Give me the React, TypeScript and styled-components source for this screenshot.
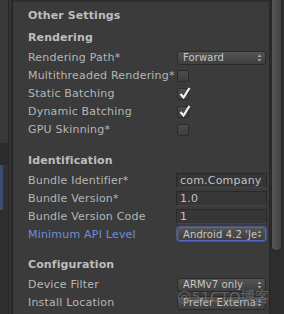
import React from "react";
import styled, { createGlobalStyle } from "styled-components";

const GlobalStyle = createGlobalStyle`
  html, body {
    margin: 0;
    padding: 0;
    background: #2c2c2c;
  }
  * {
    box-sizing: border-box;
  }
`;

const Window = styled.div`
  position: relative;
  display: flex;
  width: 284px;
  height: 314px;
  overflow: hidden;
  font-family: "DejaVu Sans", Verdana, sans-serif;
  font-size: 11px;
  color: #b6b6b6;
`;

const Gutter = styled.div`
  display: flex;
  width: 13px;
  flex-shrink: 0;
  border-right: 1px solid #242424;
`;

const GutterEdge = styled.div`
  display: flex;
  flex-direction: column;
  width: 9px;
`;

const GutterBand = styled.div<{ $h: number; $color: string; $accent?: string }>`
  height: ${(p) => p.$h}px;
  flex-shrink: 0;
  background: ${(p) => p.$color};
  border-left: 3px solid ${(p) => p.$accent || p.$color};
`;

const GutterFill = styled.div`
  flex: 1;
  background: #2f2f2f;
`;

const GutterLines = styled.div`
  width: 4px;
  border-left: 1px solid #262626;
  border-right: 1px solid #2a2a2a;
  background: #363636;
`;

const Panel = styled.div`
  flex: 1;
  background: #3b3b3b;
  border-top: 2px solid #2e2e2e;
  padding: 4px 1px 0 15px;
`;

const Title = styled.div`
  height: 18px;
  display: flex;
  align-items: center;
  font-weight: bold;
  color: #bebebe;
  letter-spacing: 0.1px;
`;

const Section = styled.div<{ $first?: boolean }>`
  margin-top: ${(p) => (p.$first ? 4.5 : 12.6)}px;
`;

const Heading = styled.div`
  height: 18px;
  margin-bottom: 2px;
  display: flex;
  align-items: center;
  font-weight: bold;
  color: #bebebe;
  letter-spacing: 0.1px;
`;

const Row = styled.div`
  display: flex;
  align-items: center;
  height: 18px;
  letter-spacing: 0.2px;
`;

const Label = styled.div<{ $active?: boolean }>`
  width: 148px;
  flex-shrink: 0;
  white-space: nowrap;
  color: ${(p) => (p.$active ? "#6f8ddc" : "#b6b6b6")};
`;

const TextField = styled.div`
  width: 91px;
  height: 15px;
  display: flex;
  align-items: center;
  padding: 0 3px;
  background: #363636;
  border: 1px solid #282828;
  border-bottom-color: #444;
  color: #c2c2c2;
  white-space: nowrap;
  overflow: hidden;
`;

const Popup = styled.div<{ $focus?: boolean }>`
  width: 89px;
  height: 14px;
  margin-left: 1px;
  display: flex;
  align-items: center;
  padding: 0 3px 0 5px;
  font-size: 10px;
  letter-spacing: 0.1px;
  background: linear-gradient(#555555, #464646 60%, #404040);
  border: 1px solid ${(p) => (p.$focus ? "#5566c4" : "#2a2a2a")};
  box-shadow: ${(p) => (p.$focus ? "0 0 1px 1px rgba(90, 110, 210, 0.55)" : "none")};
  border-radius: 3px;
  color: #c6c6c6;
`;

const PopupText = styled.span`
  flex: 1;
  white-space: nowrap;
  overflow: hidden;
`;

const Box = styled.div`
  position: relative;
  width: 12px;
  height: 12px;
  margin-left: 1px;
  border: 1px solid #2a2a2a;
  border-radius: 2px;
  background: linear-gradient(#4b4b4b, #3f3f3f);
`;

const Tick = styled.svg`
  position: absolute;
  left: 0;
  top: -3px;
`;

const ScrollTrack = styled.div`
  width: 15px;
  flex-shrink: 0;
  background: #2d2d2d;
  border-left: 1px solid #262626;
  padding: 0 2px 0 1px;
`;

const ScrollThumb = styled.div`
  height: 257px;
  margin-top: -6px;
  border-radius: 0 0 5px 5px;
  background: linear-gradient(90deg, #575757, #4b4b4b 60%, #444444);
  border: 1px solid #262626;
`;

const Watermark = styled.span`
  position: absolute;
  left: 177px;
  top: 285px;
  font-family: "DejaVu Sans", "Noto Sans CJK SC", sans-serif;
  font-size: 14.5px;
  color: rgba(235, 235, 235, 0.36);
  text-shadow: 0 0 1px rgba(0, 0, 0, 0.6);
  white-space: nowrap;
  pointer-events: none;
`;

function Arrows() {
  return (
    <svg width="5" height="8" viewBox="0 0 5 8">
      <path d="M2.5 0.5 L4.5 3 L0.5 3 Z M0.5 5 L4.5 5 L2.5 7.5 Z" fill="#a8a8a8" />
    </svg>
  );
}

function Check({ on }: { on?: boolean }) {
  return (
    <Box>
      {on && (
        <Tick width="14" height="14" viewBox="0 0 14 14">
          <path d="M2.5 8 L5.5 11.5 L11.5 2" stroke="#f2f2f2" strokeWidth="2.2" fill="none" />
        </Tick>
      )}
    </Box>
  );
}

function Select({ value, focus }: { value: string; focus?: boolean }) {
  return (
    <Popup $focus={focus}>
      <PopupText>{value}</PopupText>
      <Arrows />
    </Popup>
  );
}

export default function App() {
  return (
    <>
      <GlobalStyle />
      <Window>
        <Gutter>
          <GutterEdge>
            <GutterBand $h={143} $color="#393939" />
            <GutterBand $h={22} $color="#2c2c2c" />
            <GutterBand $h={45} $color="#313131" $accent="#3e4c72" />
            <GutterFill />
          </GutterEdge>
          <GutterLines />
        </Gutter>
        <Panel>
          <Title>Other Settings</Title>
          <Section $first>
            <Heading>Rendering</Heading>
            <Row>
              <Label>Rendering Path*</Label>
              <Select value="Forward" />
            </Row>
            <Row>
              <Label>Multithreaded Rendering*</Label>
              <Check />
            </Row>
            <Row>
              <Label>Static Batching</Label>
              <Check on />
            </Row>
            <Row>
              <Label>Dynamic Batching</Label>
              <Check on />
            </Row>
            <Row>
              <Label>GPU Skinning*</Label>
              <Check />
            </Row>
          </Section>
          <Section>
            <Heading>Identification</Heading>
            <Row>
              <Label>Bundle Identifier*</Label>
              <TextField>com.Company</TextField>
            </Row>
            <Row>
              <Label>Bundle Version*</Label>
              <TextField>1.0</TextField>
            </Row>
            <Row>
              <Label>Bundle Version Code</Label>
              <TextField>1</TextField>
            </Row>
            <Row>
              <Label $active>Minimum API Level</Label>
              <Select value="Android 4.2 'Jelly Bean'" focus />
            </Row>
          </Section>
          <Section>
            <Heading>Configuration</Heading>
            <Row>
              <Label>Device Filter</Label>
              <Select value="ARMv7 only" />
            </Row>
            <Row>
              <Label>Install Location</Label>
              <Select value="Prefer External" />
            </Row>
            <Row>
              <Label />
              <Select value="" />
            </Row>
          </Section>
        </Panel>
        <ScrollTrack>
          <ScrollThumb />
        </ScrollTrack>
        <Watermark>@51CTO博客</Watermark>
      </Window>
    </>
  );
}
